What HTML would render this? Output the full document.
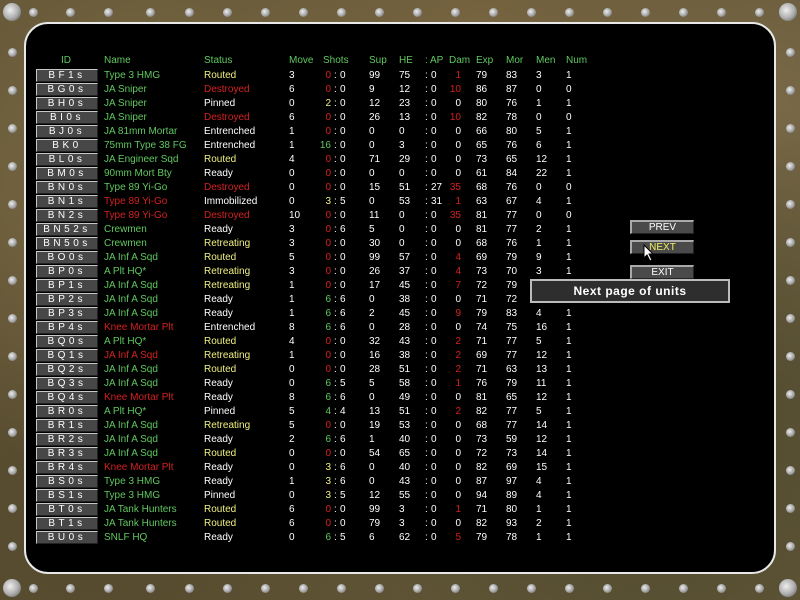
<!DOCTYPE html>
<html><head><meta charset="utf-8"><style>
*{margin:0;padding:0;box-sizing:border-box}
body{width:800px;height:600px;overflow:hidden;position:relative;font-family:"Liberation Sans",sans-serif;
background:#615536;
background-image:radial-gradient(circle at 20% 30%,#7d6b45 0,transparent 40%),radial-gradient(circle at 80% 70%,#4f4a30 0,transparent 45%),radial-gradient(circle at 60% 10%,#7a6642 0,transparent 35%),radial-gradient(circle at 10% 90%,#55492e 0,transparent 40%),radial-gradient(circle at 95% 20%,#7a6a48 0,transparent 30%);}
.panel{position:absolute;left:24px;top:22px;width:752px;height:552px;background:#000;border-radius:24px;border:2px solid #e8e8e8;}
.r{position:absolute;width:9px;height:9px;border-radius:50%;background:radial-gradient(circle at 40% 40%,#eee,#999 60%,#444);}
.R{position:absolute;width:18px;height:18px;border-radius:50%;background:radial-gradient(circle at 40% 40%,#eee,#aaa 55%,#444);}
.row{position:absolute;left:0;width:800px;height:14px;font-size:10px;line-height:14px;color:#fff}
.row span{position:absolute;top:0;white-space:nowrap}
.id{left:36px;width:62px;height:13px;top:0!important;background:#474747;border-top:1px solid #c8c8c8;border-left:1px solid #c8c8c8;border-bottom:1px solid #222;border-right:1px solid #222;text-align:center;letter-spacing:3.5px;font-size:10px;line-height:11px;color:#fff}
.n{left:104px}.s{left:204px}.mv{left:289px}.sa{left:319px;width:12px;text-align:right}.c1{left:334px}.sb{left:340px}.su{left:369px}.he{left:399px}.c2{left:425px}.ap{left:431px}.dm{left:446px;width:15px;text-align:right}.ex{left:476px}.mo{left:506px}.me{left:536px}.nu{left:566px}
.g{color:#5fc85f}.y{color:#f0f080}.rd{color:#d42020}.w{color:#fff}
.hd{position:absolute;top:55px;font-size:10px;color:#5fc85f}
.btn{position:absolute;left:630px;width:64px;height:14px;background:#4a4a4a;border-top:2px solid #aaa;border-left:2px solid #aaa;border-bottom:1px solid #222;border-right:1px solid #222;color:#fff;font-size:10px;text-align:center;line-height:11px}
.tip{position:absolute;left:530px;top:279px;width:200px;height:24px;background:#2e2e2e;border:2px solid #bbb;color:#fff;font-size:12px;font-weight:bold;text-align:center;line-height:20px;letter-spacing:.5px}
</style></head><body>
<div class="R" style="left:3px;top:3px"></div><div class="R" style="left:779px;top:3px"></div><div class="R" style="left:3px;top:579px"></div><div class="R" style="left:779px;top:579px"></div>
<div class="r" style="left:29px;top:8px"></div><div class="r" style="left:66px;top:8px"></div><div class="r" style="left:104px;top:8px"></div><div class="r" style="left:146px;top:8px"></div><div class="r" style="left:185px;top:8px"></div><div class="r" style="left:223px;top:8px"></div><div class="r" style="left:261px;top:8px"></div><div class="r" style="left:299px;top:8px"></div><div class="r" style="left:337px;top:8px"></div><div class="r" style="left:375px;top:8px"></div><div class="r" style="left:413px;top:8px"></div><div class="r" style="left:451px;top:8px"></div><div class="r" style="left:489px;top:8px"></div><div class="r" style="left:527px;top:8px"></div><div class="r" style="left:565px;top:8px"></div><div class="r" style="left:603px;top:8px"></div><div class="r" style="left:641px;top:8px"></div><div class="r" style="left:679px;top:8px"></div><div class="r" style="left:717px;top:8px"></div><div class="r" style="left:755px;top:8px"></div>
<div class="r" style="left:29px;top:584px"></div><div class="r" style="left:66px;top:584px"></div><div class="r" style="left:104px;top:584px"></div><div class="r" style="left:146px;top:584px"></div><div class="r" style="left:185px;top:584px"></div><div class="r" style="left:223px;top:584px"></div><div class="r" style="left:261px;top:584px"></div><div class="r" style="left:299px;top:584px"></div><div class="r" style="left:337px;top:584px"></div><div class="r" style="left:375px;top:584px"></div><div class="r" style="left:413px;top:584px"></div><div class="r" style="left:451px;top:584px"></div><div class="r" style="left:489px;top:584px"></div><div class="r" style="left:527px;top:584px"></div><div class="r" style="left:565px;top:584px"></div><div class="r" style="left:603px;top:584px"></div><div class="r" style="left:641px;top:584px"></div><div class="r" style="left:679px;top:584px"></div><div class="r" style="left:717px;top:584px"></div><div class="r" style="left:755px;top:584px"></div>
<div class="r" style="left:8px;top:48px"></div><div class="r" style="left:8px;top:86px"></div><div class="r" style="left:8px;top:124px"></div><div class="r" style="left:8px;top:162px"></div><div class="r" style="left:8px;top:200px"></div><div class="r" style="left:8px;top:238px"></div><div class="r" style="left:8px;top:276px"></div><div class="r" style="left:8px;top:314px"></div><div class="r" style="left:8px;top:352px"></div><div class="r" style="left:8px;top:390px"></div><div class="r" style="left:8px;top:428px"></div><div class="r" style="left:8px;top:466px"></div><div class="r" style="left:8px;top:504px"></div><div class="r" style="left:8px;top:542px"></div>
<div class="r" style="left:786px;top:48px"></div><div class="r" style="left:786px;top:86px"></div><div class="r" style="left:786px;top:124px"></div><div class="r" style="left:786px;top:162px"></div><div class="r" style="left:786px;top:200px"></div><div class="r" style="left:786px;top:238px"></div><div class="r" style="left:786px;top:276px"></div><div class="r" style="left:786px;top:314px"></div><div class="r" style="left:786px;top:352px"></div><div class="r" style="left:786px;top:390px"></div><div class="r" style="left:786px;top:428px"></div><div class="r" style="left:786px;top:466px"></div><div class="r" style="left:786px;top:504px"></div><div class="r" style="left:786px;top:542px"></div>
<div class="panel"></div>

<div class="hd" style="left:61px">ID</div><div class="hd" style="left:104px">Name</div><div class="hd" style="left:204px">Status</div><div class="hd" style="left:289px">Move</div><div class="hd" style="left:323px">Shots</div><div class="hd" style="left:369px">Sup</div><div class="hd" style="left:399px">HE</div><div class="hd" style="left:425px">: AP</div><div class="hd" style="left:449px">Dam</div><div class="hd" style="left:476px">Exp</div><div class="hd" style="left:506px">Mor</div><div class="hd" style="left:536px">Men</div><div class="hd" style="left:566px">Num</div>

<div class="row" style="top:69px"><span class="id">BF1s</span><span class="n g">Type 3 HMG</span><span class="s y">Routed</span><span class="mv">3</span><span class="sa rd">0</span><span class="c1">:</span><span class="sb">0</span><span class="su">99</span><span class="he">75</span><span class="c2">:</span><span class="ap">0</span><span class="dm rd">1</span><span class="ex">79</span><span class="mo">83</span><span class="me">3</span><span class="nu">1</span></div>
<div class="row" style="top:83px"><span class="id">BG0s</span><span class="n g">JA Sniper</span><span class="s rd">Destroyed</span><span class="mv">6</span><span class="sa rd">0</span><span class="c1">:</span><span class="sb">0</span><span class="su">9</span><span class="he">12</span><span class="c2">:</span><span class="ap">0</span><span class="dm rd">10</span><span class="ex">86</span><span class="mo">87</span><span class="me">0</span><span class="nu">0</span></div>
<div class="row" style="top:97px"><span class="id">BH0s</span><span class="n g">JA Sniper</span><span class="s">Pinned</span><span class="mv">0</span><span class="sa y">2</span><span class="c1">:</span><span class="sb">0</span><span class="su">12</span><span class="he">23</span><span class="c2">:</span><span class="ap">0</span><span class="dm">0</span><span class="ex">80</span><span class="mo">76</span><span class="me">1</span><span class="nu">1</span></div>
<div class="row" style="top:111px"><span class="id">BI0s</span><span class="n g">JA Sniper</span><span class="s rd">Destroyed</span><span class="mv">6</span><span class="sa rd">0</span><span class="c1">:</span><span class="sb">0</span><span class="su">26</span><span class="he">13</span><span class="c2">:</span><span class="ap">0</span><span class="dm rd">10</span><span class="ex">82</span><span class="mo">78</span><span class="me">0</span><span class="nu">0</span></div>
<div class="row" style="top:125px"><span class="id">BJ0s</span><span class="n g">JA 81mm Mortar</span><span class="s">Entrenched</span><span class="mv">1</span><span class="sa rd">0</span><span class="c1">:</span><span class="sb">0</span><span class="su">0</span><span class="he">0</span><span class="c2">:</span><span class="ap">0</span><span class="dm">0</span><span class="ex">66</span><span class="mo">80</span><span class="me">5</span><span class="nu">1</span></div>
<div class="row" style="top:139px"><span class="id">BK0</span><span class="n g">75mm Type 38 FG</span><span class="s">Entrenched</span><span class="mv">1</span><span class="sa g">16</span><span class="c1">:</span><span class="sb">0</span><span class="su">0</span><span class="he">3</span><span class="c2">:</span><span class="ap">0</span><span class="dm">0</span><span class="ex">65</span><span class="mo">76</span><span class="me">6</span><span class="nu">1</span></div>
<div class="row" style="top:153px"><span class="id">BL0s</span><span class="n g">JA Engineer Sqd</span><span class="s y">Routed</span><span class="mv">4</span><span class="sa rd">0</span><span class="c1">:</span><span class="sb">0</span><span class="su">71</span><span class="he">29</span><span class="c2">:</span><span class="ap">0</span><span class="dm">0</span><span class="ex">73</span><span class="mo">65</span><span class="me">12</span><span class="nu">1</span></div>
<div class="row" style="top:167px"><span class="id">BM0s</span><span class="n g">90mm Mort Bty</span><span class="s">Ready</span><span class="mv">0</span><span class="sa rd">0</span><span class="c1">:</span><span class="sb">0</span><span class="su">0</span><span class="he">0</span><span class="c2">:</span><span class="ap">0</span><span class="dm">0</span><span class="ex">61</span><span class="mo">84</span><span class="me">22</span><span class="nu">1</span></div>
<div class="row" style="top:181px"><span class="id">BN0s</span><span class="n g">Type 89 Yi-Go</span><span class="s rd">Destroyed</span><span class="mv">0</span><span class="sa rd">0</span><span class="c1">:</span><span class="sb">0</span><span class="su">15</span><span class="he">51</span><span class="c2">:</span><span class="ap">27</span><span class="dm rd">35</span><span class="ex">68</span><span class="mo">76</span><span class="me">0</span><span class="nu">0</span></div>
<div class="row" style="top:195px"><span class="id">BN1s</span><span class="n rd">Type 89 Yi-Go</span><span class="s">Immobilized</span><span class="mv">0</span><span class="sa y">3</span><span class="c1">:</span><span class="sb">5</span><span class="su">0</span><span class="he">53</span><span class="c2">:</span><span class="ap">31</span><span class="dm rd">1</span><span class="ex">63</span><span class="mo">67</span><span class="me">4</span><span class="nu">1</span></div>
<div class="row" style="top:209px"><span class="id">BN2s</span><span class="n rd">Type 89 Yi-Go</span><span class="s rd">Destroyed</span><span class="mv">10</span><span class="sa rd">0</span><span class="c1">:</span><span class="sb">0</span><span class="su">11</span><span class="he">0</span><span class="c2">:</span><span class="ap">0</span><span class="dm rd">35</span><span class="ex">81</span><span class="mo">77</span><span class="me">0</span><span class="nu">0</span></div>
<div class="row" style="top:223px"><span class="id">BN52s</span><span class="n g">Crewmen</span><span class="s">Ready</span><span class="mv">3</span><span class="sa rd">0</span><span class="c1">:</span><span class="sb">6</span><span class="su">5</span><span class="he">0</span><span class="c2">:</span><span class="ap">0</span><span class="dm">0</span><span class="ex">81</span><span class="mo">77</span><span class="me">2</span><span class="nu">1</span></div>
<div class="row" style="top:237px"><span class="id">BN50s</span><span class="n g">Crewmen</span><span class="s y">Retreating</span><span class="mv">3</span><span class="sa rd">0</span><span class="c1">:</span><span class="sb">0</span><span class="su">30</span><span class="he">0</span><span class="c2">:</span><span class="ap">0</span><span class="dm">0</span><span class="ex">68</span><span class="mo">76</span><span class="me">1</span><span class="nu">1</span></div>
<div class="row" style="top:251px"><span class="id">BO0s</span><span class="n g">JA Inf A Sqd</span><span class="s y">Routed</span><span class="mv">5</span><span class="sa rd">0</span><span class="c1">:</span><span class="sb">0</span><span class="su">99</span><span class="he">57</span><span class="c2">:</span><span class="ap">0</span><span class="dm rd">4</span><span class="ex">69</span><span class="mo">79</span><span class="me">9</span><span class="nu">1</span></div>
<div class="row" style="top:265px"><span class="id">BP0s</span><span class="n g">A Plt HQ*</span><span class="s y">Retreating</span><span class="mv">3</span><span class="sa rd">0</span><span class="c1">:</span><span class="sb">0</span><span class="su">26</span><span class="he">37</span><span class="c2">:</span><span class="ap">0</span><span class="dm rd">4</span><span class="ex">73</span><span class="mo">70</span><span class="me">3</span><span class="nu">1</span></div>
<div class="row" style="top:279px"><span class="id">BP1s</span><span class="n g">JA Inf A Sqd</span><span class="s y">Retreating</span><span class="mv">1</span><span class="sa rd">0</span><span class="c1">:</span><span class="sb">0</span><span class="su">17</span><span class="he">45</span><span class="c2">:</span><span class="ap">0</span><span class="dm rd">7</span><span class="ex">72</span><span class="mo">79</span><span class="me">5</span><span class="nu">1</span></div>
<div class="row" style="top:293px"><span class="id">BP2s</span><span class="n g">JA Inf A Sqd</span><span class="s">Ready</span><span class="mv">1</span><span class="sa g">6</span><span class="c1">:</span><span class="sb">6</span><span class="su">0</span><span class="he">38</span><span class="c2">:</span><span class="ap">0</span><span class="dm">0</span><span class="ex">71</span><span class="mo">72</span><span class="me">12</span><span class="nu">1</span></div>
<div class="row" style="top:307px"><span class="id">BP3s</span><span class="n g">JA Inf A Sqd</span><span class="s">Ready</span><span class="mv">1</span><span class="sa g">6</span><span class="c1">:</span><span class="sb">6</span><span class="su">2</span><span class="he">45</span><span class="c2">:</span><span class="ap">0</span><span class="dm rd">9</span><span class="ex">79</span><span class="mo">83</span><span class="me">4</span><span class="nu">1</span></div>
<div class="row" style="top:321px"><span class="id">BP4s</span><span class="n rd">Knee Mortar Plt</span><span class="s">Entrenched</span><span class="mv">8</span><span class="sa g">6</span><span class="c1">:</span><span class="sb">6</span><span class="su">0</span><span class="he">28</span><span class="c2">:</span><span class="ap">0</span><span class="dm">0</span><span class="ex">74</span><span class="mo">75</span><span class="me">16</span><span class="nu">1</span></div>
<div class="row" style="top:335px"><span class="id">BQ0s</span><span class="n g">A Plt HQ*</span><span class="s y">Routed</span><span class="mv">4</span><span class="sa rd">0</span><span class="c1">:</span><span class="sb">0</span><span class="su">32</span><span class="he">43</span><span class="c2">:</span><span class="ap">0</span><span class="dm rd">2</span><span class="ex">71</span><span class="mo">77</span><span class="me">5</span><span class="nu">1</span></div>
<div class="row" style="top:349px"><span class="id">BQ1s</span><span class="n rd">JA Inf A Sqd</span><span class="s y">Retreating</span><span class="mv">1</span><span class="sa rd">0</span><span class="c1">:</span><span class="sb">0</span><span class="su">16</span><span class="he">38</span><span class="c2">:</span><span class="ap">0</span><span class="dm rd">2</span><span class="ex">69</span><span class="mo">77</span><span class="me">12</span><span class="nu">1</span></div>
<div class="row" style="top:363px"><span class="id">BQ2s</span><span class="n g">JA Inf A Sqd</span><span class="s y">Routed</span><span class="mv">0</span><span class="sa rd">0</span><span class="c1">:</span><span class="sb">0</span><span class="su">28</span><span class="he">51</span><span class="c2">:</span><span class="ap">0</span><span class="dm rd">2</span><span class="ex">71</span><span class="mo">63</span><span class="me">13</span><span class="nu">1</span></div>
<div class="row" style="top:377px"><span class="id">BQ3s</span><span class="n g">JA Inf A Sqd</span><span class="s">Ready</span><span class="mv">0</span><span class="sa g">6</span><span class="c1">:</span><span class="sb">5</span><span class="su">5</span><span class="he">58</span><span class="c2">:</span><span class="ap">0</span><span class="dm rd">1</span><span class="ex">76</span><span class="mo">79</span><span class="me">11</span><span class="nu">1</span></div>
<div class="row" style="top:391px"><span class="id">BQ4s</span><span class="n rd">Knee Mortar Plt</span><span class="s">Ready</span><span class="mv">8</span><span class="sa g">6</span><span class="c1">:</span><span class="sb">6</span><span class="su">0</span><span class="he">49</span><span class="c2">:</span><span class="ap">0</span><span class="dm">0</span><span class="ex">81</span><span class="mo">65</span><span class="me">12</span><span class="nu">1</span></div>
<div class="row" style="top:405px"><span class="id">BR0s</span><span class="n g">A Plt HQ*</span><span class="s">Pinned</span><span class="mv">5</span><span class="sa g">4</span><span class="c1">:</span><span class="sb">4</span><span class="su">13</span><span class="he">51</span><span class="c2">:</span><span class="ap">0</span><span class="dm rd">2</span><span class="ex">82</span><span class="mo">77</span><span class="me">5</span><span class="nu">1</span></div>
<div class="row" style="top:419px"><span class="id">BR1s</span><span class="n g">JA Inf A Sqd</span><span class="s y">Retreating</span><span class="mv">5</span><span class="sa rd">0</span><span class="c1">:</span><span class="sb">0</span><span class="su">19</span><span class="he">53</span><span class="c2">:</span><span class="ap">0</span><span class="dm">0</span><span class="ex">68</span><span class="mo">77</span><span class="me">14</span><span class="nu">1</span></div>
<div class="row" style="top:433px"><span class="id">BR2s</span><span class="n g">JA Inf A Sqd</span><span class="s">Ready</span><span class="mv">2</span><span class="sa g">6</span><span class="c1">:</span><span class="sb">6</span><span class="su">1</span><span class="he">40</span><span class="c2">:</span><span class="ap">0</span><span class="dm">0</span><span class="ex">73</span><span class="mo">59</span><span class="me">12</span><span class="nu">1</span></div>
<div class="row" style="top:447px"><span class="id">BR3s</span><span class="n g">JA Inf A Sqd</span><span class="s y">Routed</span><span class="mv">0</span><span class="sa rd">0</span><span class="c1">:</span><span class="sb">0</span><span class="su">54</span><span class="he">65</span><span class="c2">:</span><span class="ap">0</span><span class="dm">0</span><span class="ex">72</span><span class="mo">73</span><span class="me">14</span><span class="nu">1</span></div>
<div class="row" style="top:461px"><span class="id">BR4s</span><span class="n rd">Knee Mortar Plt</span><span class="s">Ready</span><span class="mv">0</span><span class="sa y">3</span><span class="c1">:</span><span class="sb">6</span><span class="su">0</span><span class="he">40</span><span class="c2">:</span><span class="ap">0</span><span class="dm">0</span><span class="ex">82</span><span class="mo">69</span><span class="me">15</span><span class="nu">1</span></div>
<div class="row" style="top:475px"><span class="id">BS0s</span><span class="n g">Type 3 HMG</span><span class="s">Ready</span><span class="mv">1</span><span class="sa y">3</span><span class="c1">:</span><span class="sb">6</span><span class="su">0</span><span class="he">43</span><span class="c2">:</span><span class="ap">0</span><span class="dm">0</span><span class="ex">87</span><span class="mo">97</span><span class="me">4</span><span class="nu">1</span></div>
<div class="row" style="top:489px"><span class="id">BS1s</span><span class="n g">Type 3 HMG</span><span class="s">Pinned</span><span class="mv">0</span><span class="sa y">3</span><span class="c1">:</span><span class="sb">5</span><span class="su">12</span><span class="he">55</span><span class="c2">:</span><span class="ap">0</span><span class="dm">0</span><span class="ex">94</span><span class="mo">89</span><span class="me">4</span><span class="nu">1</span></div>
<div class="row" style="top:503px"><span class="id">BT0s</span><span class="n g">JA Tank Hunters</span><span class="s y">Routed</span><span class="mv">6</span><span class="sa rd">0</span><span class="c1">:</span><span class="sb">0</span><span class="su">99</span><span class="he">3</span><span class="c2">:</span><span class="ap">0</span><span class="dm rd">1</span><span class="ex">71</span><span class="mo">80</span><span class="me">1</span><span class="nu">1</span></div>
<div class="row" style="top:517px"><span class="id">BT1s</span><span class="n g">JA Tank Hunters</span><span class="s y">Routed</span><span class="mv">6</span><span class="sa rd">0</span><span class="c1">:</span><span class="sb">0</span><span class="su">79</span><span class="he">3</span><span class="c2">:</span><span class="ap">0</span><span class="dm">0</span><span class="ex">82</span><span class="mo">93</span><span class="me">2</span><span class="nu">1</span></div>
<div class="row" style="top:531px"><span class="id">BU0s</span><span class="n g">SNLF HQ</span><span class="s">Ready</span><span class="mv">0</span><span class="sa g">6</span><span class="c1">:</span><span class="sb">5</span><span class="su">6</span><span class="he">62</span><span class="c2">:</span><span class="ap">0</span><span class="dm rd">5</span><span class="ex">79</span><span class="mo">78</span><span class="me">1</span><span class="nu">1</span></div>

<div class="btn" style="top:220px">PREV</div>
<div class="btn" style="top:240px;color:#f0f060">NEXT</div>
<div class="btn" style="top:265px">EXIT</div>
<div class="tip">Next page of units</div>
<svg style="position:absolute;left:643px;top:244px" width="12" height="18" viewBox="0 0 12 18"><path d="M1 1 L1 14 L4 11 L7 17 L9 16 L6 10 L10 10 Z" fill="#fff" stroke="#000" stroke-width="1"/></svg>
</body></html>
